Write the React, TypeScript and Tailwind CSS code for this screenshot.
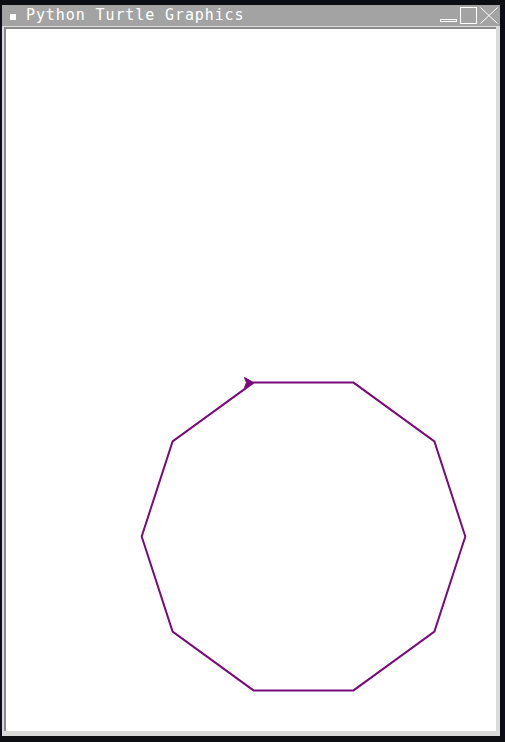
const points = [
  [253, 382.1],
  [353, 382.1],
  [433.9, 440.9],
  [464.8, 536],
  [433.9, 631.1],
  [353, 689.9],
  [253, 689.9],
  [172.1, 631.1],
  [141.2, 536],
  [172.1, 440.9],
];

const TitleBar = () => (
  <div className="flex h-[21px] items-center bg-[#a3a3a3] text-white">
    <span className="ml-[8px] mt-[2px] h-[6px] w-[6px] bg-white" />
    <span className="ml-[10px] font-['DejaVu_Sans_Mono',monospace] text-[15px] leading-none tracking-[0.9px]">
      Python Turtle Graphics
    </span>
    <div className="ml-auto flex items-end gap-[3px] pr-[2px]">
      <span className="mb-[2px] h-[3px] w-[17px] border border-white" />
      <span className="h-[17px] w-[17px] border border-white" />
      <svg width="18" height="17" viewBox="0 0 18 17" className="block">
        <path d="M0.5 0.5 L17.5 16.5 M17.5 0.5 L0.5 16.5" stroke="white" strokeWidth="1" fill="none" />
      </svg>
    </div>
  </div>
);

const App = () => {
  return (
    <div className="h-[742px] w-[505px] bg-[#0c0e13] pl-[2px] pt-[5px]">
      <div className="flex h-[731px] w-[498px] flex-col bg-[#dadada]">
        <TitleBar />
        <div className="flex-1 pb-[5px] pl-[2px] pr-[4px] pt-[1px]">
          <div className="h-full border-l-2 border-t-2 border-[#8b8b8b] bg-white">
            <svg width="490" height="702" viewBox="5.5 28.5 490 702" className="block">
              <polygon
                points={points.map((p) => p.join(',')).join(' ')}
                fill="none"
                stroke="#7a0a7a"
                strokeWidth="2"
              />
              <polygon points="253,382 244,377 246,382 244,387" fill="#7a0a7a" stroke="#7a0a7a" strokeWidth="1" />
            </svg>
          </div>
        </div>
      </div>
    </div>
  );
};

export default App;
